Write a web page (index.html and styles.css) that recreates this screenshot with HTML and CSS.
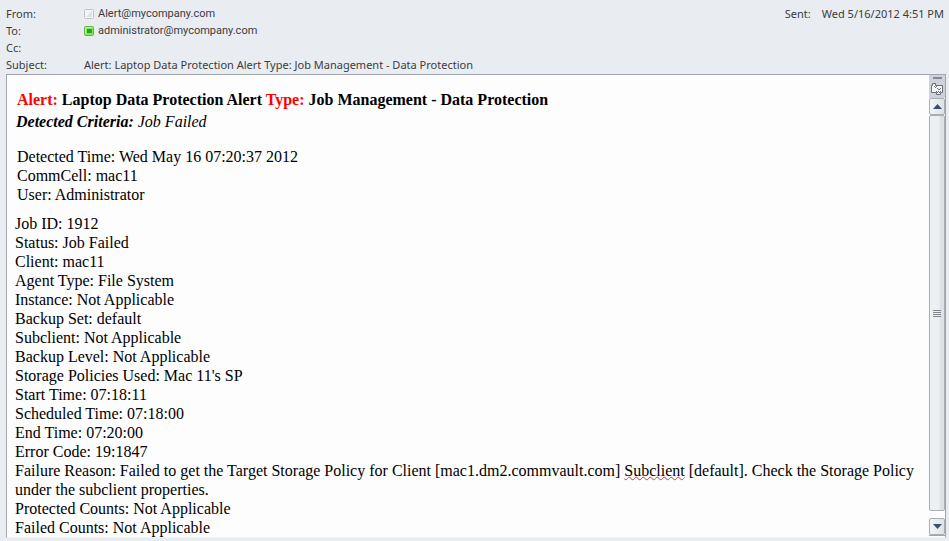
FILE: index.html
```html
<!DOCTYPE html>
<html lang="en">
<head>
<meta charset="utf-8">
<title>Alert message</title>
<link rel="stylesheet" href="styles.css">
</head>
<body>
<header class="head">
  <dl class="fields">
    <dt>From:</dt>
    <dd><svg class="presence" viewBox="0 0 10 10"><rect x=".5" y=".5" width="9" height="9" rx="1" fill="#f4f5f7" stroke="#c3c5ca"/><path d="M2 8 8 2V8Z" fill="#dfe1e5"/></svg><span class="address">Alert@mycompany.com</span></dd>
    <dt>To:</dt>
    <dd><svg class="presence" viewBox="0 0 10 10"><rect x=".5" y=".5" width="9" height="9" rx="1" fill="#8be364" stroke="#62b34a"/><rect x="3" y="3" width="5" height="4" fill="#28a51a"/><path d="M1.500 8V1.500H8" fill="none" stroke="#b9f29a"/></svg><span class="address">administrator@mycompany.com</span></dd>
    <dt>Cc:</dt>
    <dd></dd>
    <dt>Subject:</dt>
    <dd>Alert: Laptop Data Protection Alert Type: Job Management - Data Protection</dd>
  </dl>
  <p class="sent"><span>Sent:</span><time>Wed 5/16/2012 4:51 PM</time></p>
</header>
<main class="frame">
  <article class="message">
    <h1 class="title"><span class="red">Alert:</span> Laptop Data Protection Alert <span class="red">Type:</span> Job Management - Data Protection</h1>
    <p class="criteria"><b>Detected Criteria:</b> Job Failed</p>
    <p class="summary">Detected Time: Wed May 16 07:20:37 2012<br>CommCell: mac11<br>User: Administrator</p>
    <p class="details">Job ID: 1912<br>Status: Job Failed<br>Client: mac11<br>Agent Type: File System<br>Instance: Not Applicable<br>Backup Set: default<br>Subclient: Not Applicable<br>Backup Level: Not Applicable<br>Storage Policies Used: Mac 11's SP<br>Start Time: 07:18:11<br>Scheduled Time: 07:18:00<br>End Time: 07:20:00<br>Error Code: 19:1847<br>Failure Reason: Failed to get the Target Storage Policy for Client [mac1.dm2.commvault.com] <span class="misspelt">Subclient</span> [default]. Check the Storage Policy under the subclient properties.<br>Protected Counts: Not Applicable<br>Failed Counts: Not Applicable</p>
  </article>
  <div class="scrollbar">
    <div class="tools">
      <span class="split"></span>
      <button class="ruler" aria-label="View ruler"><svg viewBox="0 0 13 13" width="13" height="13"><path d="M1.500.5h3v2h7v7h-2v2h-4v-2h-5v-7h1Z" fill="#f4f5f6" stroke="#6c7077"/><path d="M3 3.500h1M4 4.500h1M5 3.500h1M6 5.500h1M9 5.500h1M7 6.500h2M5 8.500h1M6 9.500h1M8 9.500h1M9 8.500h1M7 8.500h1" stroke="#6c7077"/></svg></button>
    </div>
    <button class="arrow" aria-label="Scroll up"><svg viewBox="0 0 9 5" width="9" height="5"><path d="M0 5 4.500 0 9 5Z" fill="#3d4f70"/></svg></button>
    <div class="thumb"><span class="grip"></span></div>
    <div class="gap"></div>
    <button class="arrow" aria-label="Scroll down"><svg viewBox="0 0 9 5" width="9" height="5"><path d="M0 0H9L4.500 5Z" fill="#3d4f70"/></svg></button>
  </div>
</main>
</body>
</html>
```
FILE: styles.css
```css
* { box-sizing: border-box; }

body {
  display: flex;
  flex-direction: column;
  min-height: 100vh;
  margin: 0;
  padding: 5px 3px 4px 6px;
  background: #e9edf1;
}

p, h1, dl, dd { margin: 0; }

.head {
  display: flex;
  justify-content: space-between;
  padding: 0 2px 1px 0;
  font: 11px/17px "Noto Sans", "Open Sans", sans-serif;
  color: #3b3b3f;
}

.fields {
  display: grid;
  grid-template-columns: 78px auto;
  grid-auto-rows: 17px;
}

.fields dd {
  display: flex;
  align-items: center;
  gap: 4px;
}

.address { font-family: Roboto, sans-serif; }

.presence {
  width: 10px;
  height: 10px;
}

.sent {
  display: flex;
  gap: 11px;
}

.frame {
  flex: 1;
  display: flex;
  border: 1px solid #9fa4ad;
  border-bottom-color: #f1f3f5;
  background: #fdfdfe;
}

.message {
  flex: 1;
  padding: 15px 8px 0;
  font: 16px/19px "Liberation Serif", serif;
  color: #000;
}

.title {
  padding-left: 2px;
  font-size: 16px;
  line-height: 19px;
}

.red { color: #f00; }

.criteria {
  padding: 3px 0 0 1px;
  font-style: italic;
}

.summary { padding: 16px 0 10px 2px; }

.misspelt {
  text-decoration: underline wavy #e33 1px;
  text-decoration-skip-ink: none;
  text-underline-offset: 0;
}

.scrollbar {
  display: flex;
  flex-direction: column;
  width: 16px;
  margin-bottom: 1px;
  background: #fdfdfe;
  border-bottom: 1px solid #9fa4ad;
}

.tools {
  display: flex;
  flex-direction: column;
  align-items: center;
  gap: 4px;
  height: 23px;
  padding-top: 2px;
  background: #cfd2da;
}

.split {
  width: 9px;
  height: 2px;
  background: #858992;
}

.scrollbar button {
  display: flex;
  align-items: center;
  justify-content: center;
  padding: 0;
}

.ruler {
  border: 0;
  background: none;
}

.arrow {
  height: 17px;
  border: 1px solid #a9adb4;
  border-radius: 2px;
  background: linear-gradient(90deg, #f2f4f6, #e0e3e6);
}

.thumb {
  flex: 1;
  display: flex;
  align-items: center;
  justify-content: center;
  border: 1px solid #a9adb4;
  border-radius: 2px;
  background: linear-gradient(90deg, #edf0f3 65%, #dfe2e5 75%);
}

.grip {
  width: 8px;
  height: 7px;
  background: repeating-linear-gradient(#82868d 0 1px, transparent 1px 2px);
}

.gap { height: 7px; }
```
